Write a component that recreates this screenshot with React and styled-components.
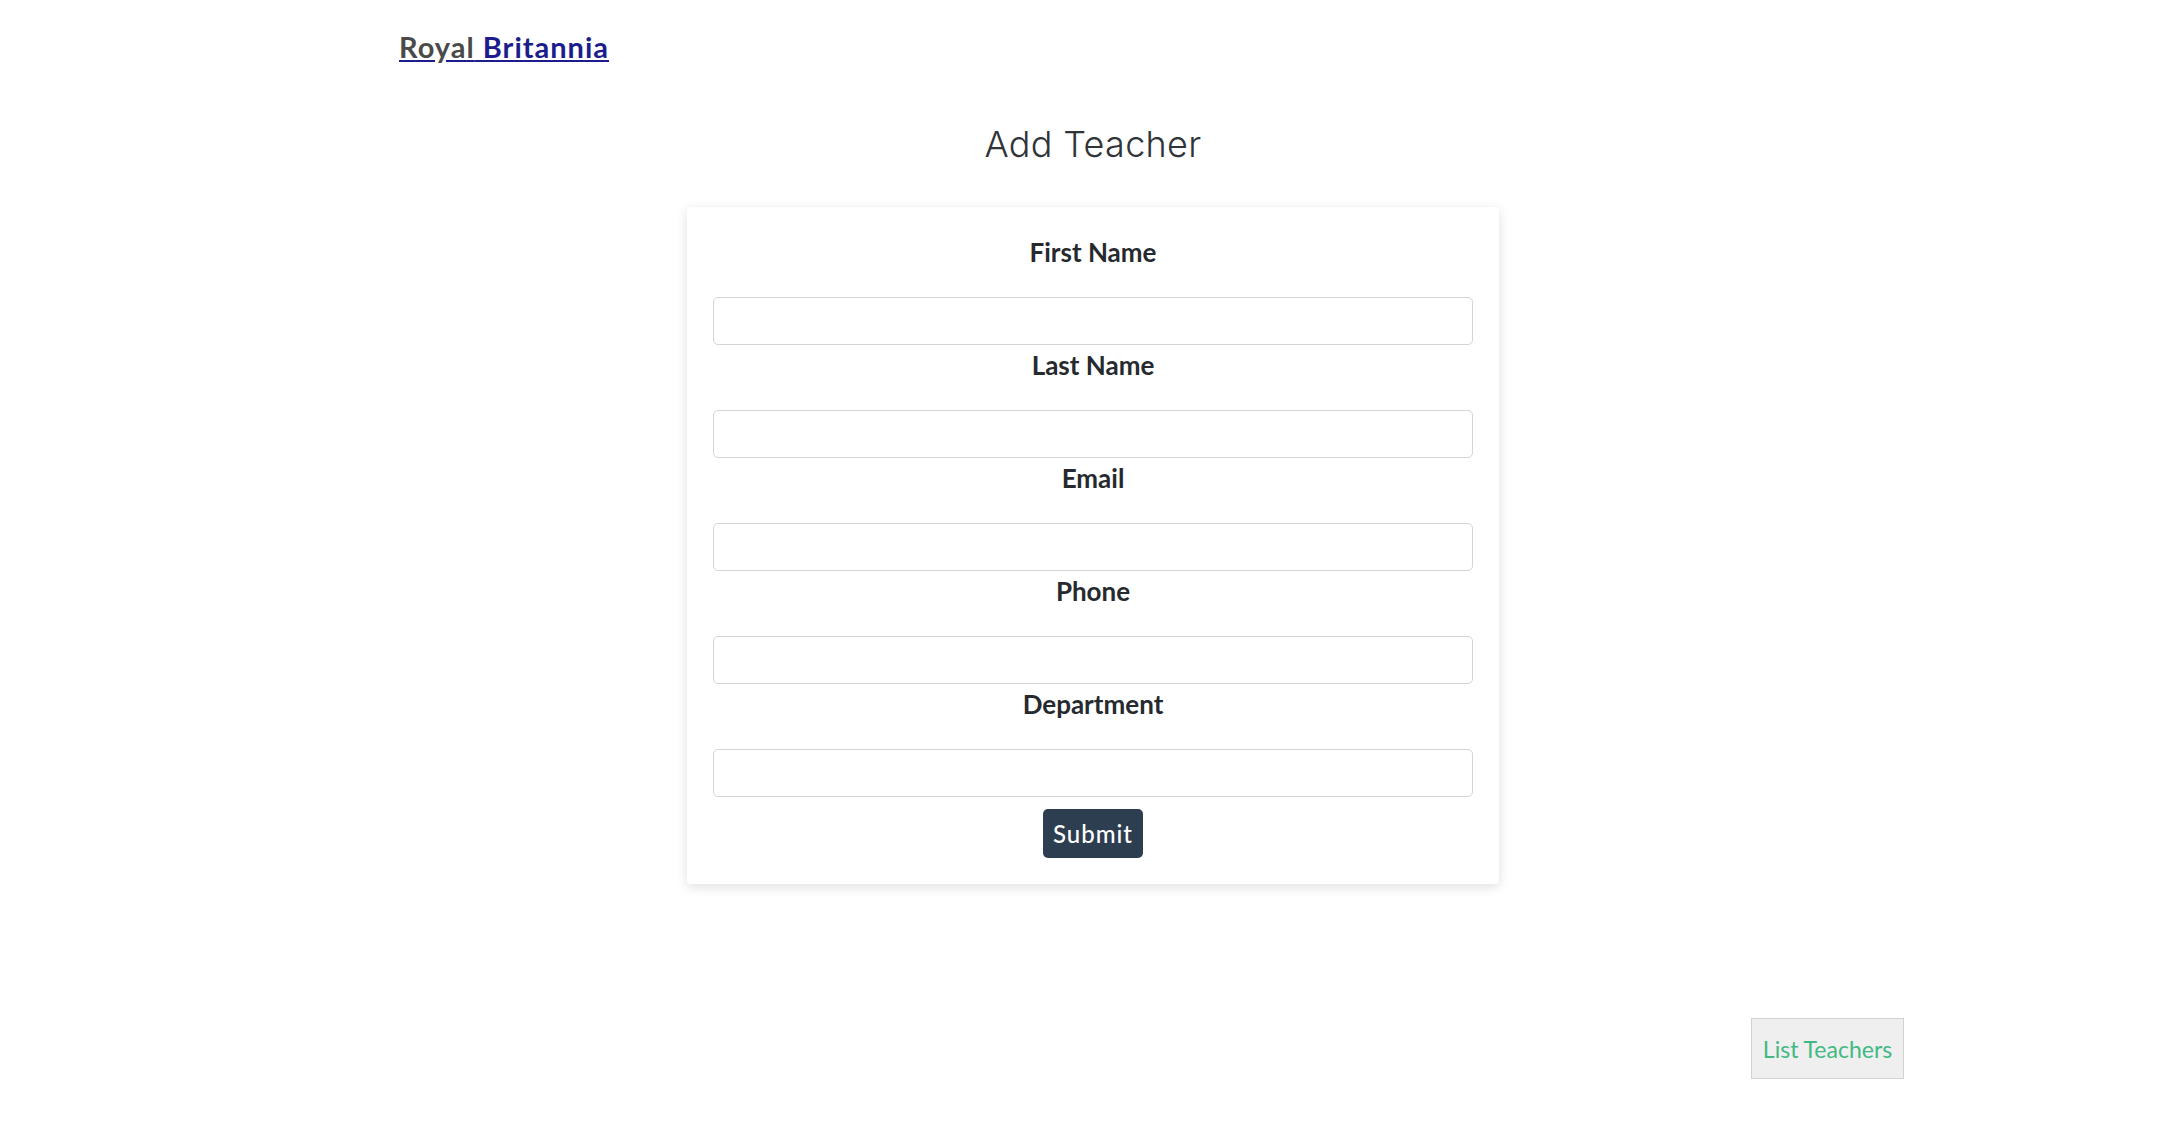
import React from "react";
import styled, { createGlobalStyle } from "styled-components";

const GlobalStyle = createGlobalStyle`
  body {
    margin: 0;
    background: #fff;
    font-family: Lato, "Open Sans", sans-serif;
  }
`;

const Page = styled.div`
  min-height: 1136px;
  display: flex;
  flex-direction: column;
`;

const Header = styled.header`
  padding: 31px 0 0 399px;
`;

const Logo = styled.a`
  font-size: 29px;
  line-height: 32px;
  font-weight: 700;
  letter-spacing: 1px;
  color: #1c1c8c;
  text-decoration: underline;
  cursor: pointer;
`;

const LogoDim = styled.span`
  color: #4a4a4a;
`;

const Main = styled.main`
  display: flex;
  flex-direction: column;
  align-items: center;
  padding: 61px 0 0 6px;
`;

const Title = styled.h1`
  margin: 0 0 42px;
  font-family: Inter, "Open Sans", sans-serif;
  font-weight: 300;
  font-size: 36px;
  line-height: 41px;
  color: #2f3438;
  letter-spacing: 0.3px;
`;

const Card = styled.form`
  width: 812px;
  box-sizing: border-box;
  padding: 29px 26px 26px;
  background: #fff;
  border-radius: 4px;
  box-shadow: 0 3px 12px rgba(0, 0, 0, 0.13);
  display: flex;
  flex-direction: column;
  align-items: center;
`;

const Field = styled.div`
  width: 100%;
  display: flex;
  flex-direction: column;
  align-items: center;
  margin-bottom: 4px;
`;

const Label = styled.label`
  font-size: 26px;
  line-height: 32px;
  font-weight: 700;
  color: #262a2e;
  margin-bottom: 29px;
`;

const Input = styled.input`
  width: 100%;
  height: 48px;
  box-sizing: border-box;
  border: 1.5px solid #d4d4d4;
  border-radius: 5px;
  padding: 0 12px;
  font-size: 20px;
  font-family: inherit;
  outline: none;
`;

const SubmitButton = styled.button`
  margin-top: 8px;
  width: 100px;
  height: 49px;
  border: none;
  border-radius: 5px;
  background: #2c3e50;
  color: #fff;
  font-family: Lato, sans-serif;
  font-size: 24px;
  font-weight: 500;
  letter-spacing: 1px;
  cursor: pointer;
`;

const Footer = styled.div`
  display: flex;
  justify-content: flex-end;
  padding: 134px 276px 0 0;
`;

const ListButton = styled.button`
  width: 153px;
  height: 61px;
  background: #efefef;
  border: 1.5px solid #d2d2d2;
  color: #42b983;
  font-family: Lato, sans-serif;
  font-size: 23px;
  cursor: pointer;
`;

const fields = ["First Name", "Last Name", "Email", "Phone", "Department"];

export default function App() {
  return (
    <Page>
      <GlobalStyle />
      <Header>
        <Logo>
          <LogoDim>Royal</LogoDim> Britannia
        </Logo>
      </Header>
      <Main>
        <Title>Add Teacher</Title>
        <Card onSubmit={e => e.preventDefault()}>
          {fields.map(f => (
            <Field key={f}>
              <Label>{f}</Label>
              <Input type="text" />
            </Field>
          ))}
          <SubmitButton type="submit">Submit</SubmitButton>
        </Card>
      </Main>
      <Footer>
        <ListButton>List Teachers</ListButton>
      </Footer>
    </Page>
  );
}
